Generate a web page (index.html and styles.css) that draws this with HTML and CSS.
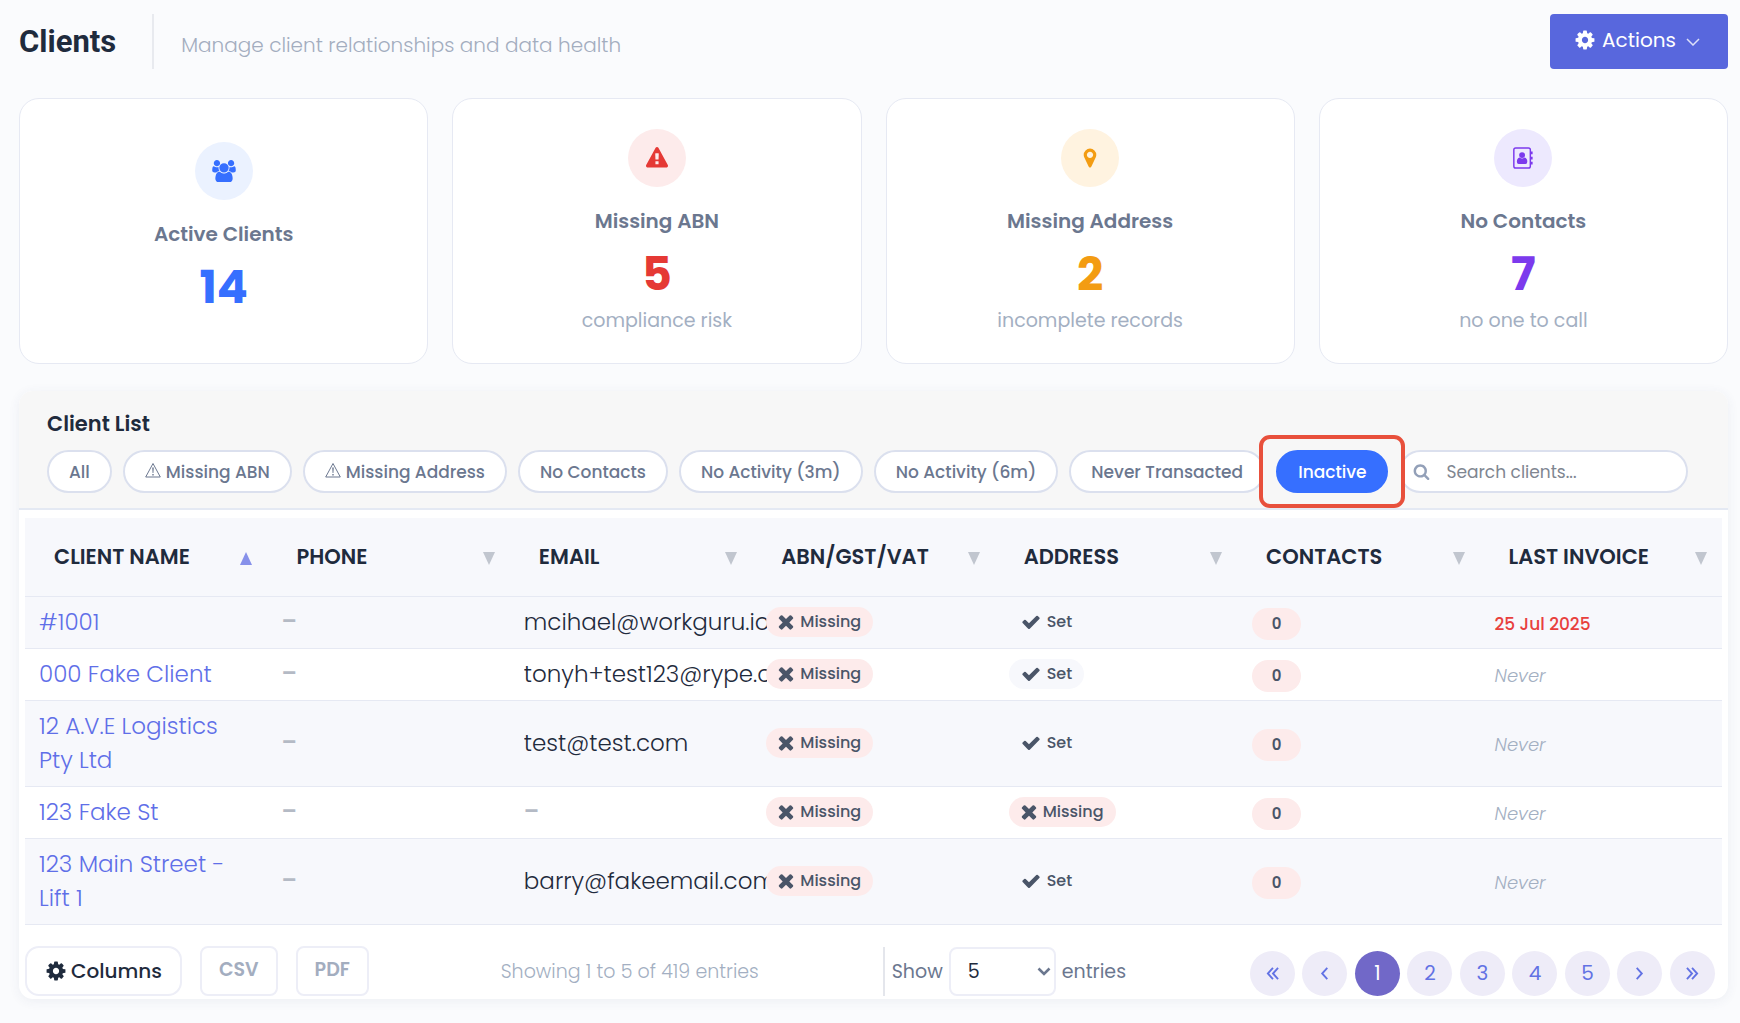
FILE: index.html
```html
<!DOCTYPE html>
<html lang="en">
<head>
  <meta charset="UTF-8">
  <meta name="viewport" content="width=device-width, initial-scale=1.0">
  <title>Clients</title>
  <link rel="stylesheet" href="styles.css">
</head>
<body>
  <!-- icon sprite -->
  <svg class="sprite" aria-hidden="true">
    <symbol id="i-cog" viewBox="0 0 1792 1792"><path d="M1152 896q0-106-75-181t-181-75-181 75-75 181 75 181 181 75 181-75 75-181zm512-109v222q0 12-8 23t-20 13l-185 28q-19 54-39 91 35 50 107 138 10 12 10 25t-9 23q-27 37-99 108t-94 71q-12 0-26-9l-138-108q-44 23-91 38-16 136-29 186-7 28-36 28h-222q-14 0-24.5-8.5t-11.5-21.5l-28-184q-49-16-90-37l-141 107q-10 9-25 9-14 0-25-11-126-114-165-168-7-10-7-23 0-12 8-23 15-21 51-66.5t54-70.5q-27-50-41-99l-183-27q-13-2-21-12.5t-8-23.5v-222q0-12 8-23t19-13l186-28q14-46 39-92-40-57-107-138-10-12-10-24 0-10 9-23 26-36 98.5-107.5t94.5-71.5q13 0 26 10l138 107q44-23 91-38 16-136 29-186 7-28 36-28h222q14 0 24.5 8.5t11.5 21.5l28 184q49 16 90 37l142-107q9-9 24-9 13 0 25 10 129 119 165 170 7 8 7 22 0 12-8 23-15 21-51 66.5t-54 70.5q26 50 41 98l183 28q13 2 21 12.5t8 23.5z"/></symbol>
    <symbol id="i-users" viewBox="-64 0 1920 1792"><path d="M529 896q-162 5-265 128h-134q-82 0-138-40.5t-56-118.5q0-353 124-353 6 0 43.5 21t97.5 42.5 119 21.5q67 0 133-23-5 37-5 66 0 139 81 256zm1071 637q0 120-73 189.5t-194 69.5h-874q-121 0-194-69.5t-73-189.5q0-53 3.5-103.5t14-109 26.5-108.5 43-97.5 62-81 85.5-53.5 111.5-20q10 0 43 21.5t73 48 107 48 135 21.5 135-21.5 107-48 73-48 43-21.5q61 0 111.5 20t85.5 53.5 62 81 43 97.5 26.5 108.5 14 109 3.5 103.5zm-1024-1277q0 106-75 181t-181 75-181-75-75-181 75-181 181-75 181 75 75 181zm704 384q0 159-112.5 271.5t-271.5 112.5-271.5-112.5-112.5-271.5 112.5-271.5 271.5-112.5 271.5 112.5 112.5 271.5zm576 225q0 78-56 118.5t-138 40.5h-134q-103-123-265-128 81-117 81-256 0-29-5-66 66 23 133 23 59 0 119-21.5t97.5-42.5 43.5-21q124 0 124 353zm-128-609q0 106-75 181t-181 75-181-75-75-181 75-181 181-75 181 75 75 181z"/></symbol>
    <symbol id="i-warning" viewBox="0 0 1792 1792"><path d="M1024 1375v-190q0-14-9.500-23.500t-22.500-9.500h-192q-13 0-22.500 9.500t-9.500 23.500v190q0 14 9.500 23.500t22.500 9.500h192q13 0 22.500-9.500t9.500-23.500zm-2-374l18-459q0-12-10-19-13-11-24-11h-220q-11 0-24 11-10 7-10 21l17 457q0 10 10 16.500t24 6.500h185q14 0 23.500-6.500t10.500-16.500zm-14-934l768 1408q35 63-2 126-17 29-46.500 46t-63.500 17h-1536q-34 0-63.500-17t-46.500-46q-37-63-2-126l768-1408q17-31 47-49t65-18 65 18 47 49z"/></symbol>
    <symbol id="i-marker" viewBox="0 0 1792 1792"><path d="M1152 640q0-106-75-181t-181-75-181 75-75 181 75 181 181 75 181-75 75-181zm256 0q0 109-33 179l-364 774q-16 33-47.500 52t-67.500 19-67.500-19-46.500-52l-365-774q-33-70-33-179 0-212 150-362t362-150 362 150 150 362z"/></symbol>
    <symbol id="i-book" viewBox="0 0 22 24"><path d="M3 1h14a2 2 0 0 1 2 2v18a2 2 0 0 1-2 2H3a2 2 0 0 1-2-2V3a2 2 0 0 1 2-2z" fill="none" stroke="currentColor" stroke-width="1.600"/><path d="M19 5h2.500v3H19zM19 10.500h2.500v3H19zM19 16h2.500v3H19z"/><circle cx="10" cy="8.800" r="3.200"/><path d="M7.300 11.500q2.700 2 5.400 0 3 .8 3 4.500 0 2.500-2 2.500H6.300q-2 0-2-2.500 0-3.700 3-4.500z"/></symbol>
    <symbol id="i-search" viewBox="0 0 1792 1792"><path d="M1216 832q0-185-131.500-316.500t-316.500-131.500-316.500 131.500-131.500 316.500 131.500 316.500 316.500 131.500 316.500-131.500 131.500-316.500zm512 832q0 52-38 90t-90 38q-54 0-90-38l-343-342q-179 124-399 124-143 0-273.500-55.500t-225-150-150-225-55.500-273.500 55.500-273.500 150-225 225-150 273.500-55.500 273.500 55.500 225 150 150 225 55.500 273.500q0 220-124 399l343 343q37 37 37 90z"/></symbol>
    <symbol id="i-check" viewBox="0 0 1792 1792"><path d="M1671 566q0 40-28 68l-724 724-136 136q-28 28-68 28t-68-28l-136-136-362-362q-28-28-28-68t28-68l136-136q28-28 68-28t68 28l294 295 656-657q28-28 68-28t68 28l136 136q28 28 28 68z"/></symbol>
    <symbol id="i-times" viewBox="240 270 1312 1312"><path d="M1490 1322q0 40-28 68l-136 136q-28 28-68 28t-68-28l-294-294-294 294q-28 28-68 28t-68-28l-136-136q-28-28-28-68t28-68l294-294-294-294q-28-28-28-68t28-68l136-136q28-28 68-28t68 28l294 294 294-294q28-28 68-28t68 28l136 136q28 28 28 68t-28 68l-294 294 294 294q28 28 28 68z"/></symbol>
    <symbol id="i-alert" viewBox="0 0 16 16"><path d="M8 1.500L15.300 15H.7z" fill="none" stroke="currentColor" stroke-width="1"/><path d="M7.200 5.500h1.600L8.400 11h-.8zM7.300 12h1.400v1.400H7.300z"/></symbol>
    <symbol id="i-down" viewBox="0 0 14 8"><path d="M1 1l6 6 6-6" fill="none" stroke="currentColor" stroke-width="1.500"/></symbol>
    <symbol id="i-select" viewBox="0 0 14 9"><path d="M1.500 1.500L7 7l5.500-5.500" fill="none" stroke="currentColor" stroke-width="2.600"/></symbol>
    <symbol id="i-prev" viewBox="0 0 14 14"><path d="M10 1L4.500 7l5.500 6" fill="none" stroke="currentColor" stroke-width="2"/></symbol>
    <symbol id="i-next" viewBox="0 0 14 14"><path d="M4 1l5.500 6L4 13" fill="none" stroke="currentColor" stroke-width="2"/></symbol>
    <symbol id="i-first" viewBox="0 0 14 14"><path d="M7.500 1L2 7l5.500 6M13 1L7.500 7l5.500 6" fill="none" stroke="currentColor" stroke-width="2"/></symbol>
    <symbol id="i-last" viewBox="0 0 14 14"><path d="M1 1l5.500 6L1 13M6.500 1L12 7l-5.500 6" fill="none" stroke="currentColor" stroke-width="2"/></symbol>
  </svg>

  <header class="page-header">
    <h1>Clients</h1>
    <p class="page-sub">Manage client relationships and data health</p>
    <button type="button" class="actions-btn">
      <svg class="cog"><use href="#i-cog"/></svg>
      <span>Actions</span>
      <svg class="chevron"><use href="#i-down"/></svg>
    </button>
  </header>

  <main>
    <section class="stats">
      <div class="stat blue">
        <div class="stat-icon"><svg><use href="#i-users"/></svg></div>
        <div class="stat-label">Active Clients</div>
        <div class="stat-value">14</div>
      </div>
      <div class="stat red">
        <div class="stat-icon"><svg><use href="#i-warning"/></svg></div>
        <div class="stat-label">Missing ABN</div>
        <div class="stat-value">5</div>
        <div class="stat-note">compliance risk</div>
      </div>
      <div class="stat orange">
        <div class="stat-icon"><svg><use href="#i-marker"/></svg></div>
        <div class="stat-label">Missing Address</div>
        <div class="stat-value">2</div>
        <div class="stat-note">incomplete records</div>
      </div>
      <div class="stat purple">
        <div class="stat-icon"><svg><use href="#i-book"/></svg></div>
        <div class="stat-label">No Contacts</div>
        <div class="stat-value">7</div>
        <div class="stat-note">no one to call</div>
      </div>
    </section>

    <section class="panel">
      <div class="panel-head">
        <h2>Client List</h2>
        <div class="filters">
          <button type="button" class="pill">All</button>
          <button type="button" class="pill"><svg><use href="#i-alert"/></svg>Missing ABN</button>
          <button type="button" class="pill"><svg><use href="#i-alert"/></svg>Missing Address</button>
          <button type="button" class="pill">No Contacts</button>
          <button type="button" class="pill">No Activity (3m)</button>
          <button type="button" class="pill">No Activity (6m)</button>
          <button type="button" class="pill">Never Transacted</button>
          <div class="highlight">
            <button type="button" class="pill active">Inactive</button>
          </div>
          <label class="search">
            <svg><use href="#i-search"/></svg>
            <input type="text" placeholder="Search clients..." aria-label="Search clients">
          </label>
        </div>
      </div>

      <div class="panel-body">
        <table class="clients">
          <thead>
            <tr>
              <th><div>Client Name<i class="sort asc"></i></div></th>
              <th><div>Phone<i class="sort"></i></div></th>
              <th><div>Email<i class="sort"></i></div></th>
              <th><div>ABN/GST/VAT<i class="sort"></i></div></th>
              <th><div>Address<i class="sort"></i></div></th>
              <th><div>Contacts<i class="sort"></i></div></th>
              <th><div>Last Invoice<i class="sort"></i></div></th>
            </tr>
          </thead>
          <tbody>
            <tr>
              <td><a href="#">#1001</a></td>
              <td class="none">–</td>
              <td><div class="email">mcihael@workguru.io</div></td>
              <td><span class="badge bad"><svg><use href="#i-times"/></svg>Missing</span></td>
              <td><span class="badge"><svg class="tick"><use href="#i-check"/></svg>Set</span></td>
              <td><span class="count">0</span></td>
              <td class="date">25 Jul 2025</td>
            </tr>
            <tr>
              <td><a href="#">000 Fake Client</a></td>
              <td class="none">–</td>
              <td><div class="email">tonyh+test123@rype.com</div></td>
              <td><span class="badge bad"><svg><use href="#i-times"/></svg>Missing</span></td>
              <td><span class="badge"><svg class="tick"><use href="#i-check"/></svg>Set</span></td>
              <td><span class="count">0</span></td>
              <td class="never">Never</td>
            </tr>
            <tr>
              <td><a href="#">12 A.V.E Logistics Pty Ltd</a></td>
              <td class="none">–</td>
              <td><div class="email">test@test.com</div></td>
              <td><span class="badge bad"><svg><use href="#i-times"/></svg>Missing</span></td>
              <td><span class="badge"><svg class="tick"><use href="#i-check"/></svg>Set</span></td>
              <td><span class="count">0</span></td>
              <td class="never">Never</td>
            </tr>
            <tr>
              <td><a href="#">123 Fake St</a></td>
              <td class="none">–</td>
              <td class="none">–</td>
              <td><span class="badge bad"><svg><use href="#i-times"/></svg>Missing</span></td>
              <td><span class="badge bad"><svg><use href="#i-times"/></svg>Missing</span></td>
              <td><span class="count">0</span></td>
              <td class="never">Never</td>
            </tr>
            <tr>
              <td><a href="#">123 Main Street - Lift 1</a></td>
              <td class="none">–</td>
              <td><div class="email">barry@fakeemail.com</div></td>
              <td><span class="badge bad"><svg><use href="#i-times"/></svg>Missing</span></td>
              <td><span class="badge"><svg class="tick"><use href="#i-check"/></svg>Set</span></td>
              <td><span class="count">0</span></td>
              <td class="never">Never</td>
            </tr>
          </tbody>
        </table>

        <div class="table-foot">
          <div class="exports">
            <button type="button" class="columns-btn"><svg><use href="#i-cog"/></svg>Columns</button>
            <button type="button" class="export-btn">CSV</button>
            <button type="button" class="export-btn">PDF</button>
          </div>
          <div class="info">Showing 1 to 5 of 419 entries</div>
          <div class="length">
            <label for="page-size">Show</label>
            <div class="select-wrap">
              <select id="page-size">
                <option>5</option>
                <option>10</option>
                <option>25</option>
              </select>
              <svg><use href="#i-select"/></svg>
            </div>
            <span>entries</span>
          </div>
          <nav class="pager" aria-label="Pages">
            <button type="button" aria-label="First"><svg><use href="#i-first"/></svg></button>
            <button type="button" aria-label="Previous"><svg><use href="#i-prev"/></svg></button>
            <button type="button" class="current">1</button>
            <button type="button">2</button>
            <button type="button">3</button>
            <button type="button">4</button>
            <button type="button">5</button>
            <button type="button" aria-label="Next"><svg><use href="#i-next"/></svg></button>
            <button type="button" aria-label="Last"><svg><use href="#i-last"/></svg></button>
          </nav>
        </div>
      </div>
    </section>
  </main>
</body>
</html>
```

FILE: styles.css
```css
* { margin: 0; padding: 0; box-sizing: border-box; }
body { font-family: Poppins, Inter, "Open Sans", sans-serif; background: #fafbfd; color: #1f2b3d; padding: 14px 12px 24px 19px; }
button, input, select { font-family: inherit; }
button { cursor: pointer; }
svg { fill: currentColor; flex-shrink: 0; }
.sprite { display: none; }

/* header */
.page-header { display: flex; align-items: stretch; margin-bottom: 29px; }
h1 { font-family: Roboto, sans-serif; font-size: 31px; line-height: 55px; height: 55px; font-weight: 700; padding-right: 36px; border-right: 2px solid #e8eaef; }
.page-sub { font-size: 20px; font-weight: 300; line-height: 62px; height: 55px; color: #a3adbf; padding-left: 27px; }
.actions-btn { margin-left: auto; width: 178px; height: 55px; display: flex; align-items: center; justify-content: center; gap: 6px; padding-bottom: 3px; background: #5867dd; color: #fff; border: none; border-radius: 4px; font-size: 20px; font-weight: 400; }
.cog { width: 22px; height: 22px; }
.chevron { width: 14px; height: 8px; margin: 3px 4px 0; opacity: 0.8; }

/* stat cards */
.stats { display: grid; grid-template-columns: repeat(4, 1fr); gap: 24px; margin-bottom: 27px; }
.stat { height: 266px; display: flex; flex-direction: column; align-items: center; justify-content: center; background: #fff; border: 1px solid #e6e9f3; border-radius: 20px; }
.stat-icon { width: 58px; height: 58px; border-radius: 50%; display: flex; align-items: center; justify-content: center; margin-bottom: 20px; }
.stat-icon svg { width: 24px; height: 22px; }
.stat-label { font-size: 20px; font-weight: 600; line-height: 28px; color: #6b778f; margin-bottom: 8px; }
.stat-value { font-size: 46px; font-weight: 700; line-height: 62px; margin-bottom: 3px; }
.stat-note { font-size: 19px; line-height: 26px; color: #a3afc2; }
.blue .stat-icon { background: #ebf2ff; }
.blue { color: #366fff; }
.red .stat-icon { background: #fdebeb; }
.red { color: #e53935; }
.orange .stat-icon { background: #fff3e0; }
.orange { color: #f39c12; }
.purple .stat-icon { background: #ede9fe; }
.purple { color: #7c3aed; }

/* client list */
.panel { background: #fff; border-radius: 14px; box-shadow: 0 2px 12px rgba(60, 70, 110, 0.07); }
.panel-head { background: #f7f7f7; border-bottom: 2px solid #e4e9f3; border-radius: 14px 14px 0 0; padding: 19px 40px 15px 28px; }
h2 { font-size: 21px; font-weight: 600; line-height: 28px; margin-bottom: 12px; }
.filters { display: flex; gap: 11px; }
.pill { height: 43px; padding: 0 20px; border: 2px solid #dbe0ee; border-radius: 22px; background: #fff; color: #6b778f; font-size: 17px; font-weight: 500; white-space: nowrap; }
.pill svg { width: 16px; height: 16px; margin-right: 5px; }
.pill.active { position: relative; background: #366fff; border-color: #366fff; color: #fff; }
.highlight { position: relative; }
.highlight::before { content: ""; position: absolute; inset: -15px -17px; background: #f7f7f7; border: 4px solid #e8503c; border-radius: 11px; z-index: 0; }
.search { flex: 1; min-width: 0; height: 43px; display: flex; align-items: center; gap: 16px; padding: 0 12px; border: 2px solid #dbe0ee; border-radius: 22px; background: #fff; color: #93a0b8; }
.search svg { width: 17px; height: 17px; }
.search input { flex: 1; min-width: 0; border: none; outline: none; background: none; font-size: 17px; color: #1f2b3d; }
.search input::placeholder { color: #808691; }
.panel-body { padding: 8px 6px 3px; }

.clients { width: 100%; table-layout: fixed; border-collapse: collapse; }
.clients th { height: 78px; background: #f7f8fc; border-bottom: 1px solid #e6e9f3; padding: 0 15px 0 29px; text-align: left; text-transform: uppercase; font-size: 21px; font-weight: 600; white-space: nowrap; }
.clients th div { display: flex; align-items: center; justify-content: space-between; }
.sort { margin-top: 4px; border: 6px solid transparent; border-top: 13px solid #c1c6cf; border-bottom: 0; }
.sort.asc { border-top: 0; border-bottom: 13px solid #8791ea; }
.clients td { border-bottom: 1px solid #e6e9f3; padding: 8px 14px 9px; font-size: 23px; font-weight: 300; line-height: 34px; vertical-align: middle; }
.clients td:nth-child(n+6) { padding: 11px 15px 7px; line-height: 32px; }
.clients tbody tr:nth-child(odd) { background: #f7f8fc; }
.clients a { color: #5f6fe8; text-decoration: none; }
.clients .none { color: #b4bac5; font-size: 22px; font-weight: 600; }
.email { overflow: hidden; white-space: nowrap; margin-right: -29px; }
.badge { position: relative; display: flex; align-items: center; gap: 6px; width: fit-content; height: 30px; padding: 0 12px; border-radius: 15px; background: #f7f8fc; color: #4a5568; font-size: 16px; font-weight: 500; line-height: 30px; }
.badge.bad { background: #fdebeb; }
.badge svg { width: 16px; height: 16px; }
.badge .tick { width: 20px; height: 20px; }
.count { display: block; width: 49px; height: 32px; border-radius: 16px; background: #fdebeb; color: #4a5568; font-size: 15px; font-weight: 600; line-height: 32px; text-align: center; }
.clients .date { font-size: 17px; font-weight: 500; color: #e8403d; }
.clients .never { font-size: 18px; font-style: italic; color: #a3afc2; }

/* table footer */
.table-foot { display: flex; align-items: flex-end; justify-content: space-between; padding-top: 21px; }
.exports { display: flex; gap: 18px; margin-right: 8px; }
.columns-btn, .export-btn { height: 50px; background: #fff; border: 2px solid #edeef7; }
.columns-btn { display: flex; align-items: center; gap: 4px; padding: 0 18px; border-radius: 14px; color: #1f2b3d; font-size: 20px; font-weight: 500; }
.columns-btn svg { width: 22px; height: 22px; }
.export-btn { padding: 0 17px 3px; border-radius: 8px; color: #a3adbf; font-size: 19px; font-weight: 600; }
.info { font-size: 19px; font-weight: 300; line-height: 48px; color: #a3afc2; }
.length { display: flex; align-items: center; gap: 6px; height: 49px; padding-left: 7px; border-left: 2px solid #e4e6ec; font-size: 19px; color: #6b778f; }
.select-wrap { position: relative; }
.select-wrap select { appearance: none; width: 107px; height: 49px; padding: 0 17px; border: 2px solid #edeef7; border-radius: 8px; background: #fff; color: #1f2b3d; font-size: 19px; }
.select-wrap svg { position: absolute; right: 5px; top: 20px; width: 14px; height: 9px; pointer-events: none; }
.pager { width: 465px; display: flex; justify-content: space-between; margin-right: 7px; }
.pager button { display: flex; align-items: center; justify-content: center; width: 45px; height: 45px; border: none; border-radius: 50%; background: #eeecf8; color: #6272e4; font-size: 20px; }
.pager svg { width: 13px; height: 13px; }
.pager .current { background: #7168c8; color: #fff; }
```
